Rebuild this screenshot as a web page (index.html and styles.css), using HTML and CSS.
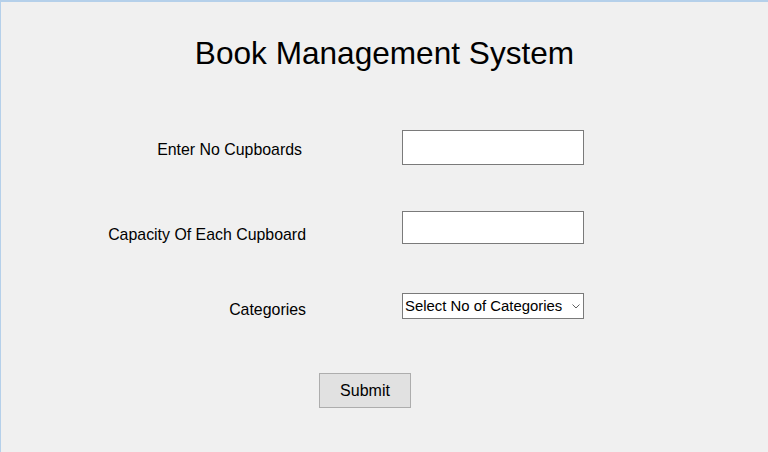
FILE: index.html
```html
<!DOCTYPE html>
<html>
<head>
<meta charset="utf-8">
<link rel="stylesheet" href="styles.css">
</head>
<body>
<div class="window">
  <h1 class="title">Book Management System</h1>
  <form class="form">
    <div class="row row-1">
      <label class="label label-narrow">Enter No Cupboards</label>
      <input class="textbox textbox-tall" type="text">
    </div>
    <div class="row row-2">
      <label class="label label-low">Capacity Of Each Cupboard</label>
      <input class="textbox textbox-short" type="text">
    </div>
    <div class="row row-3">
      <label class="label label-mid">Categories</label>
      <div class="select">
        <span class="select-text">Select No of Categories</span>
        <svg class="chevron" width="8" height="5" viewBox="0 0 8 5"><path d="M0.5 0.5 L4 4 L7.5 0.5" fill="none" stroke="#606060" stroke-width="1"/></svg>
      </div>
    </div>
    <div class="actions">
      <button class="button" type="button">Submit</button>
    </div>
  </form>
</div>
</body>
</html>
```

FILE: styles.css
```css
html, body {
  margin: 0;
  padding: 0;
}
body {
  background: #f0f0f0;
  font-family: "Liberation Sans", Arial, sans-serif;
  color: #000;
}
.window {
  box-sizing: border-box;
  width: 768px;
  height: 452px;
  background: #f0f0f0;
  border-top: 2px solid #b5d0ea;
  border-left: 1px solid #b5d0ea;
  overflow: hidden;
}
.title {
  margin: 0;
  padding-top: 33px;
  font-size: 31.6px;
  line-height: 36px;
  font-weight: normal;
  text-align: center;
}
.form {
  display: flex;
  flex-direction: column;
  margin: 59px 0 0 0;
}
.row {
  display: flex;
  align-items: flex-start;
  gap: 96px;
}
.row-2 { margin-top: 46px; }
.row-3 { margin-top: 48px; }
.label {
  box-sizing: border-box;
  width: 305px;
  text-align: right;
  font-size: 15.9px;
  line-height: 20px;
  margin-top: 10px;
}
.label-narrow { padding-right: 4px; }
.label-low { margin-top: 14px; }
.label-mid { margin-top: 7px; }
.textbox {
  box-sizing: border-box;
  width: 182px;
  margin: 0;
  padding: 0 3px;
  border: 1px solid #7a7a7a;
  background: #fff;
  font: inherit;
  outline: none;
}
.textbox-tall { height: 35px; }
.textbox-short { height: 33px; }
.select {
  box-sizing: border-box;
  width: 182px;
  height: 26px;
  border: 1px solid #7a7a7a;
  background: #fff;
  display: flex;
  align-items: center;
  justify-content: space-between;
  padding: 0 3px 0 2px;
}
.select-text {
  font-size: 14.9px;
  line-height: 18px;
  margin-top: -1px;
}
.chevron {
  display: block;
  margin-top: 1px;
}
.actions {
  display: flex;
  margin-top: 53px;
  padding-left: 318px;
}
.button {
  box-sizing: border-box;
  width: 92px;
  height: 35px;
  margin: 0;
  padding: 0;
  background: #e1e1e1;
  border: 1px solid #adadad;
  border-radius: 0;
  font-family: inherit;
  font-size: 16px;
  color: #000;
}
```
